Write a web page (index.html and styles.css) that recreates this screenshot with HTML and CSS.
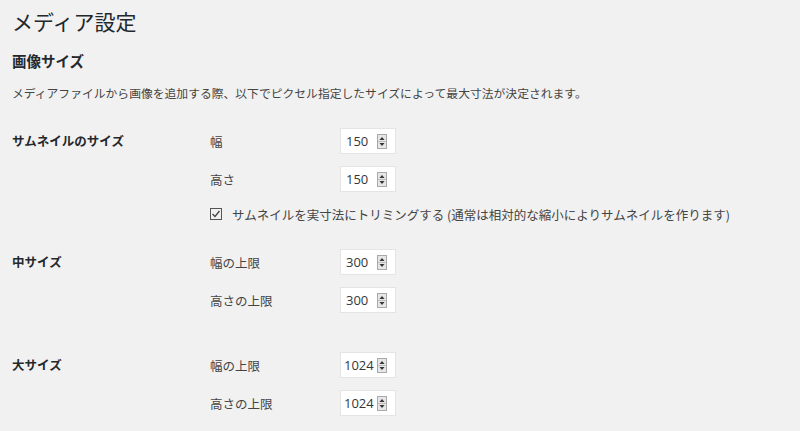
FILE: index.html
```html
<!DOCTYPE html>
<html lang="ja">
<head>
  <meta charset="UTF-8" />
  <title>メディア設定</title>
  <link rel="stylesheet" href="styles.css">
</head>
<body>
  <div class="wrap">
    <h1>メディア設定</h1>

    <h2>画像サイズ</h2>
    <p class="desc">メディアファイルから画像を追加する際、以下でピクセル指定したサイズによって最大寸法が決定されます。</p>

    <!-- サムネイル -->
    <div class="row">
      <div class="th">サムネイルのサイズ</div>
      <div class="td">
        <div class="field">
          <span class="label">幅</span>
          <span class="num"><span class="val">150</span><svg class="spin" width="10" height="15" viewBox="0 0 10 15"><rect x="0.5" y="0.5" width="9" height="14" fill="#e6e6e6" stroke="#a9a9a9"/><line x1="1" y1="7.5" x2="9" y2="7.5" stroke="#bdbdbd"/><path d="M5 3 L7.5 6 L2.5 6 Z" fill="#333"/><path d="M5 12 L7.5 9 L2.5 9 Z" fill="#333"/></svg></span>
        </div>
        <div class="field">
          <span class="label">高さ</span>
          <span class="num"><span class="val">150</span><svg class="spin" width="10" height="15" viewBox="0 0 10 15"><rect x="0.5" y="0.5" width="9" height="14" fill="#e6e6e6" stroke="#a9a9a9"/><line x1="1" y1="7.5" x2="9" y2="7.5" stroke="#bdbdbd"/><path d="M5 3 L7.5 6 L2.5 6 Z" fill="#333"/><path d="M5 12 L7.5 9 L2.5 9 Z" fill="#333"/></svg></span>
        </div>
        <div class="check">
          <svg class="box" width="12" height="12" viewBox="0 0 12 12"><rect x="0.5" y="0.5" width="11" height="11" fill="none" stroke="#555"/><path d="M2.5 6 L5 8.5 L9.5 3" fill="none" stroke="#444" stroke-width="1.3"/></svg>
          <span>サムネイルを実寸法にトリミングする (通常は相対的な縮小によりサムネイルを作ります)</span>
        </div>
      </div>
    </div>

    <!-- 中サイズ -->
    <div class="row">
      <div class="th">中サイズ</div>
      <div class="td">
        <div class="field">
          <span class="label">幅の上限</span>
          <span class="num"><span class="val">300</span><svg class="spin" width="10" height="15" viewBox="0 0 10 15"><rect x="0.5" y="0.5" width="9" height="14" fill="#e6e6e6" stroke="#a9a9a9"/><line x1="1" y1="7.5" x2="9" y2="7.5" stroke="#bdbdbd"/><path d="M5 3 L7.5 6 L2.5 6 Z" fill="#333"/><path d="M5 12 L7.5 9 L2.5 9 Z" fill="#333"/></svg></span>
        </div>
        <div class="field">
          <span class="label">高さの上限</span>
          <span class="num"><span class="val">300</span><svg class="spin" width="10" height="15" viewBox="0 0 10 15"><rect x="0.5" y="0.5" width="9" height="14" fill="#e6e6e6" stroke="#a9a9a9"/><line x1="1" y1="7.5" x2="9" y2="7.5" stroke="#bdbdbd"/><path d="M5 3 L7.5 6 L2.5 6 Z" fill="#333"/><path d="M5 12 L7.5 9 L2.5 9 Z" fill="#333"/></svg></span>
        </div>
      </div>
    </div>

    <!-- 大サイズ -->
    <div class="row large">
      <div class="th">大サイズ</div>
      <div class="td">
        <div class="field">
          <span class="label">幅の上限</span>
          <span class="num wide"><span class="val">1024</span><svg class="spin" width="10" height="15" viewBox="0 0 10 15"><rect x="0.5" y="0.5" width="9" height="14" fill="#e6e6e6" stroke="#a9a9a9"/><line x1="1" y1="7.5" x2="9" y2="7.5" stroke="#bdbdbd"/><path d="M5 3 L7.5 6 L2.5 6 Z" fill="#333"/><path d="M5 12 L7.5 9 L2.5 9 Z" fill="#333"/></svg></span>
        </div>
        <div class="field">
          <span class="label">高さの上限</span>
          <span class="num wide"><span class="val">1024</span><svg class="spin" width="10" height="15" viewBox="0 0 10 15"><rect x="0.5" y="0.5" width="9" height="14" fill="#e6e6e6" stroke="#a9a9a9"/><line x1="1" y1="7.5" x2="9" y2="7.5" stroke="#bdbdbd"/><path d="M5 3 L7.5 6 L2.5 6 Z" fill="#333"/><path d="M5 12 L7.5 9 L2.5 9 Z" fill="#333"/></svg></span>
        </div>
      </div>
    </div>
  </div>
</body>
</html>
```

FILE: styles.css
```css
body {
  margin: 0;
  background-color: #f1f1f1;
  color: #444;
  font-family: "Noto Sans CJK JP", "Noto Sans", sans-serif;
  font-size: 12.5px;
}

.wrap {
  padding: 8px 12px 0;
}

h1 {
  margin: 0;
  font-size: 21px;
  font-weight: 400;
  line-height: 26px;
  color: #23282d;
}

h2 {
  margin: 17px 0 0;
  font-size: 14.5px;
  font-weight: bold;
  line-height: 20px;
  color: #23282d;
}

.desc {
  margin: 12px 0 0;
  font-size: 11.8px;
  line-height: 20px;
}

.row {
  display: flex;
  margin-top: 25px;
}

.row.large {
  margin-top: 39px;
}

.th {
  width: 198px;
  flex-shrink: 0;
  font-weight: bold;
  color: #23282d;
  line-height: 26px;
}

.td {
  display: flex;
  flex-direction: column;
  gap: 12px;
}

.field {
  display: flex;
  align-items: center;
  height: 26px;
}

.label {
  width: 130px;
}

.num {
  display: flex;
  align-items: center;
  justify-content: space-between;
  box-sizing: border-box;
  width: 56px;
  height: 26px;
  padding: 0 8px 0 5px;
  background-color: #fff;
  border: 1px solid #e4e4e4;
  color: #32373c;
  font-family: "Open Sans", sans-serif;
  font-size: 13px;
}

.num.wide {
  padding: 0 8px 0 3px;
}

.spin {
  display: block;
}

.check {
  display: flex;
  align-items: center;
  height: 20px;
}

.check .box {
  margin-right: 10px;
}
```
